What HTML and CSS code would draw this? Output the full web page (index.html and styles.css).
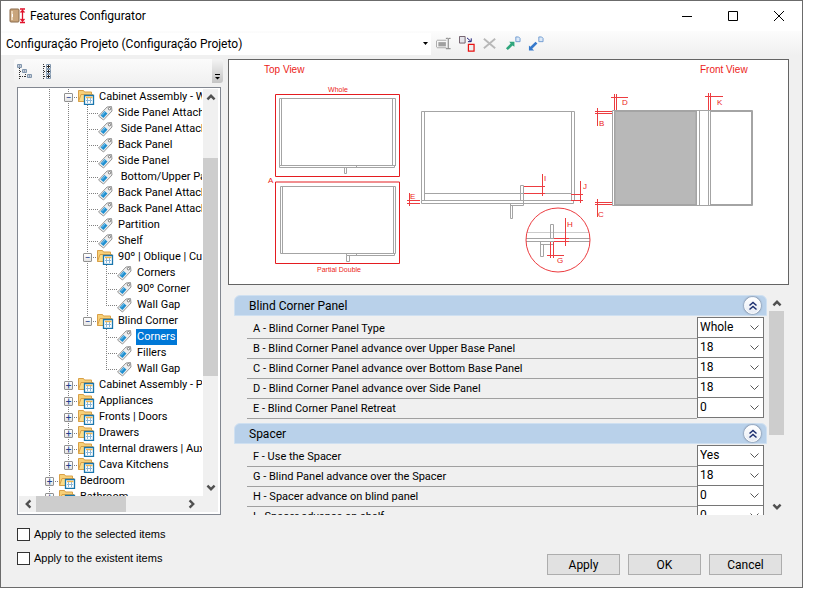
FILE: index.html
```html
<!DOCTYPE html>
<html lang="en">
<head>
    <meta charset="UTF-8">
    <meta name="viewport" content="width=device-width, initial-scale=1.0">
    <title>Features Configurator</title>
    <link rel="stylesheet" href="styles.css">
</head>
<body>
    <!-- Shared icons -->
    <svg class="sprite" aria-hidden="true">
        <symbol id="folder" viewBox="0 0 17 16">
            <path d="M.5 12.500V1.500h5l1 1.500h7v4" fill="#f7d078" stroke="#d9a047"/>
            <path d="M.5 12.500 3 5.500h12v7z" fill="#fbdc8a" stroke="#d9a047"/>
            <path d="M6.500 6.500h9v9h-9z" fill="#fff" stroke="#1976ad" stroke-width="1.300"/>
            <path d="M8 8.500h6.500" stroke="#f0b64c" stroke-width="1.500"/>
            <path d="M8 11.500h6M9.500 9v5M12.500 9v5" stroke="#8db8d8"/>
        </symbol>
        <symbol id="tag" viewBox="0 0 17 16">
            <path d="M1.500 11 10 2l4.500-.5.5 4.500-8.500 9z" fill="#eee" stroke="#969696"/>
            <path d="M3.500 10.500 7.500 6l3 2.500-4 4.500z" fill="#1f8fd0"/>
            <path d="m5 10.500 3-3.500" stroke="#7cc4ec"/>
            <circle cx="12.500" cy="3.700" r="1.200" fill="#fff" stroke="#777"/>
        </symbol>
        <symbol id="chevrons" viewBox="0 0 18 18">
            <path d="m5.500 8.500 3.500-3 3.500 3M5.500 12.500l3.500-3 3.500 3" fill="none" stroke="#1c2f70" stroke-width="1.500"/>
        </symbol>
        <symbol id="up" viewBox="0 0 10 10">
            <path d="m2 7 3-3 3 3" fill="none" stroke="#505050" stroke-width="2"/>
        </symbol>
    </svg>

    <div class="window">
        <header class="titlebar">
            <svg class="app-icon" viewBox="0 0 18 16">
                <rect x="1" y="1" width="9" height="13" rx="1" fill="#c9a57c" stroke="#8a6a4a"/>
                <path d="M3 3v9" stroke="#ead3b5" stroke-width="2"/>
                <path d="M3.500 6v3" stroke="#fff"/>
                <path d="M11 1h5M11 14.500h5M13.500 2v12M11.500 4.500l2-2 2 2M11.500 11l2 2 2-2" fill="none" stroke="#e0102a" stroke-width="1.300"/>
            </svg>
            <h1>Features Configurator</h1>
            <div class="window-buttons">
                <button aria-label="Minimize"><svg viewBox="0 0 10 10"><path d="M0 5.500h10" stroke="#000"/></svg></button>
                <button aria-label="Maximize"><svg viewBox="0 0 10 10"><path d="M.5.5h9v9h-9z" fill="none" stroke="#000"/></svg></button>
                <button aria-label="Close"><svg viewBox="0 0 10 10"><path d="m0 0 10 10M10 0 0 10" stroke="#000"/></svg></button>
            </div>
        </header>

        <div class="toolbar">
            <select class="project" aria-label="Configuration">
                <option>Configuração Projeto (Configuração Projeto)</option>
            </select>
            <button aria-label="Rename"><svg viewBox="0 0 17 17">
                <path d="M1 4.500h10M1 12.500h10M.5 5v7" stroke="#a8a8a8" fill="none"/>
                <path d="M2.500 6.500h8v4.500h-8z" fill="#a0a0a0"/>
                <path d="M10.500 2.500h2l.5.500.5-.5h2M10.500 13.500h5M13 3v10" stroke="#777" fill="none"/>
            </svg></button>
            <button aria-label="Replace"><svg viewBox="0 0 17 17">
                <path d="M.5.500h6v7h-6z" fill="#e4e4ea" stroke="#6c5a66"/>
                <path d="m8.500 2 4 3.500M13 2.500v3.500H9.500" stroke="#101070" fill="none"/>
                <path d="M10 9h6v7h-6z" fill="#eee" stroke="#e81010" stroke-width="1.300"/>
            </svg></button>
            <button aria-label="Delete"><svg viewBox="0 0 17 17">
                <path d="m2 3 12 10M14 3 2 13" stroke="#b8b8b8" stroke-width="2"/>
            </svg></button>
            <button aria-label="Export"><svg viewBox="0 0 17 17">
                <path d="M11.500 1h3l1.500 1.500V6h-4.500z" fill="#dce9f8" stroke="#6f9bd0"/>
                <path d="m1 13 5-5-1.500-2H10v5.500L8 10l-5 5z" fill="#2fa67c"/>
            </svg></button>
            <button aria-label="Import"><svg viewBox="0 0 17 17">
                <path d="M11.500 1h3l1.500 1.500V6h-4.500z" fill="#dce9f8" stroke="#6f9bd0"/>
                <path d="M1 15.500V10l1.500 1.500L8 6l2 2-5.500 5.500 2 2z" fill="#3579cc"/>
            </svg></button>
        </div>

        <main class="content">
            <aside class="sidebar">
                <div class="tree-toolbar">
                    <button aria-label="Collapse all"><svg viewBox="0 0 17 17">
                        <path d="M3.500 5v11M4 8.500h2M9.500 11v4M4 13.500h6" fill="none" stroke="#333" stroke-dasharray="1 1"/>
                        <path d="M1.500 1.500h4v3h-4zM6.500 6.500h4v3h-4zM11.500 11.500h4v3h-4z" fill="#fff" stroke="#8196ad"/>
                        <path d="M2.500 3h2M7.500 8h2M12.500 13h2" stroke="#223c66"/>
                    </svg></button>
                    <button aria-label="Expand all"><svg viewBox="0 0 17 17">
                        <path d="M.5 1v15M1 3.500h3M1 8.500h3M1 13.500h3" fill="none" stroke="#333" stroke-dasharray="1 1"/>
                        <path d="M3.500 1.500h4v4h-4zM3.500 6.500h4v4h-4zM3.500 11.500h4v4h-4z" fill="#fff" stroke="#8196ad"/>
                        <path d="M4 3.500h3M4 8.500h3M4 13.500h3M5.500 2v3M5.500 7v3M5.500 12v3" stroke="#222"/>
                    </svg></button>
                    <button class="overflow" aria-label="Toolbar options"><svg viewBox="0 0 9 12">
                        <path d="M2 3.500h5" stroke="#000"/><path d="M2 6h5L4.500 8.500z"/>
                    </svg></button>
                </div>

                <div class="tree-box">
                    <div class="tree-view">
                        <ul class="tree">
                            <li>
                                <ul>
                                    <li>
                                        <div class="node"><button class="toggle" aria-label="Collapse">−</button><svg><use href="#folder"/></svg><a href="#">Cabinet Assembly - Wall</a></div>
                                        <ul>
                                            <li><div class="node"><i></i><svg><use href="#tag"/></svg><a href="#">Side Panel Attachment</a></div></li>
                                            <li><div class="node"><i></i><svg><use href="#tag"/></svg><a href="#">&nbsp;Side Panel Attachment</a></div></li>
                                            <li><div class="node"><i></i><svg><use href="#tag"/></svg><a href="#">Back Panel</a></div></li>
                                            <li><div class="node"><i></i><svg><use href="#tag"/></svg><a href="#">Side Panel</a></div></li>
                                            <li><div class="node"><i></i><svg><use href="#tag"/></svg><a href="#">&nbsp;Bottom/Upper Panel</a></div></li>
                                            <li><div class="node"><i></i><svg><use href="#tag"/></svg><a href="#">Back Panel Attachment</a></div></li>
                                            <li><div class="node"><i></i><svg><use href="#tag"/></svg><a href="#">Back Panel Attachment</a></div></li>
                                            <li><div class="node"><i></i><svg><use href="#tag"/></svg><a href="#">Partition</a></div></li>
                                            <li><div class="node"><i></i><svg><use href="#tag"/></svg><a href="#">Shelf</a></div></li>
                                            <li>
                                                <div class="node"><button class="toggle" aria-label="Collapse">−</button><svg><use href="#folder"/></svg><a href="#">90º | Oblique | Curved</a></div>
                                                <ul>
                                                    <li><div class="node"><i></i><svg><use href="#tag"/></svg><a href="#">Corners</a></div></li>
                                                    <li><div class="node"><i></i><svg><use href="#tag"/></svg><a href="#">90º Corner</a></div></li>
                                                    <li><div class="node"><i></i><svg><use href="#tag"/></svg><a href="#">Wall Gap</a></div></li>
                                                </ul>
                                            </li>
                                            <li>
                                                <div class="node"><button class="toggle" aria-label="Collapse">−</button><svg><use href="#folder"/></svg><a href="#">Blind Corner</a></div>
                                                <ul>
                                                    <li><div class="node"><i></i><svg><use href="#tag"/></svg><a class="selected" href="#">Corners</a></div></li>
                                                    <li><div class="node"><i></i><svg><use href="#tag"/></svg><a href="#">Fillers</a></div></li>
                                                    <li><div class="node"><i></i><svg><use href="#tag"/></svg><a href="#">Wall Gap</a></div></li>
                                                </ul>
                                            </li>
                                        </ul>
                                    </li>
                                    <li><div class="node"><button class="toggle" aria-label="Expand">+</button><svg><use href="#folder"/></svg><a href="#">Cabinet Assembly - Panels</a></div></li>
                                    <li><div class="node"><button class="toggle" aria-label="Expand">+</button><svg><use href="#folder"/></svg><a href="#">Appliances</a></div></li>
                                    <li><div class="node"><button class="toggle" aria-label="Expand">+</button><svg><use href="#folder"/></svg><a href="#">Fronts | Doors</a></div></li>
                                    <li><div class="node"><button class="toggle" aria-label="Expand">+</button><svg><use href="#folder"/></svg><a href="#">Drawers</a></div></li>
                                    <li><div class="node"><button class="toggle" aria-label="Expand">+</button><svg><use href="#folder"/></svg><a href="#">Internal drawers | Auxiliary</a></div></li>
                                    <li><div class="node"><button class="toggle" aria-label="Expand">+</button><svg><use href="#folder"/></svg><a href="#">Cava Kitchens</a></div></li>
                                </ul>
                            </li>
                            <li><div class="node"><button class="toggle" aria-label="Expand">+</button><svg><use href="#folder"/></svg><a href="#">Bedroom</a></div></li>
                            <li><div class="node"><button class="toggle" aria-label="Expand">+</button><svg><use href="#folder"/></svg><a href="#">Bathroom</a></div></li>
                        </ul>
                    </div>
                    <div class="scroll-v tree-scroll">
                        <button aria-label="Scroll up"><svg><use href="#up"/></svg></button>
                        <div class="track"><div class="thumb"></div></div>
                        <button class="down" aria-label="Scroll down"><svg><use href="#up"/></svg></button>
                    </div>
                    <div class="scroll-h">
                        <button class="left" aria-label="Scroll left"><svg><use href="#up"/></svg></button>
                        <div class="track"><div class="thumb"></div></div>
                        <button class="right" aria-label="Scroll right"><svg><use href="#up"/></svg></button>
                    </div>
                </div>
            </aside>

            <section class="details">
                <div class="preview">
                    <svg viewBox="229 60 559 224" role="img" aria-label="Top and front views">
                        <g class="grey">
                            <path d="M279.500 166V98.500h116V166M281.500 98.500V165M392.500 98.500V165M279.500 165.500h116M279.500 167.500h115v-2M356.500 165v2.500M279.500 165v2.500M344.500 168v5.500h2V168"/>
                            <path d="M280.500 253.500v-67h115v67h-2M282.500 186.500v67M393.500 186.500v67M280.500 253.500h114v2h-48v-2M356.500 253v2.500M346.500 255.500v6h3v-6"/>
                            <path d="M421.500 200.500v-89h153v89M424.500 111.500v89M571.500 111.500v89M424.500 193.500h147M421.500 200.500h153M421.500 200.500v3h152v-3M520.500 200.500v-15h3v15M523.500 200.500v5h-13v-2M510.500 205v13.500h2V205"/>
                            <path class="light" d="M527 232.500h62"/>
                            <path d="M526 238.500h64M526 241.500h64M550.500 238.500v-14h3v14M553.500 241.500v3h-13v-3M540.500 244v12.500h3V244"/>
                        </g>
                        <g class="grey">
                            <path d="M615 111.500h81v93h-81z" fill="#b8b8b8"/>
                            <path d="M612.500 110.500h140v95h-140zM614.500 111v94M696.500 111v94M699.500 111v94M708.500 111v94M710.500 111v94M751.500 111v94M710 111.500h42M710 204.500h42"/>
                        </g>
                        <g class="red">
                            <path class="frame" d="M275.500 94.500h124v82h-124zM275.500 182h124v81.500h-124z"/>
                            <circle cx="558" cy="240" r="32"/>
                            <path d="M542.500 174v22M524 186.500h21M524 193.500h21M580.500 181v22M571 194.500h12M571 200.500h12M409.500 193v13M407 200.500h13M407 203.500h13"/>
                            <path d="M565.500 218v28M554 238.500h15M554 241.500h15M550.500 242v16M553.500 242v16M547 255.500h17"/>
                            <path d="M614.500 94v16M616.500 94v16M611 97.500h17M708.500 93v17M710.500 93v17M705 96.500h18M597.500 108v18M595 111.500h17M595 113.500h17M597.500 199v18M595 202.500h17M595 204.500h17"/>
                        </g>
                        <g class="heading">
                            <text x="264" y="73">Top View</text>
                            <text x="700" y="73">Front View</text>
                        </g>
                        <g class="caption">
                            <text x="338" y="92">Whole</text>
                            <text x="339" y="272">Partial Double</text>
                        </g>
                        <g class="letters">
                            <text x="268" y="183">A</text>
                            <text x="599" y="126">B</text>
                            <text x="598" y="217">C</text>
                            <text x="622" y="105">D</text>
                            <text x="410" y="199">E</text>
                            <text x="557" y="263">G</text>
                            <text x="567" y="227">H</text>
                            <text x="544" y="181">I</text>
                            <text x="583" y="189">J</text>
                            <text x="717" y="105">K</text>
                        </g>
                    </svg>
                </div>

                <div class="features">
                    <div class="feature-list">
                        <section class="group">
                            <header>
                                <h2>Blind Corner Panel</h2>
                                <button class="collapse" aria-label="Collapse"><svg><use href="#chevrons"/></svg></button>
                            </header>
                            <div class="rows">
                                <div class="row"><label for="a">A - Blind Corner Panel Type</label><select id="a"><option>Whole</option><option>Partial Double</option></select></div>
                                <div class="row"><label for="b">B - Blind Corner Panel advance over Upper Base Panel</label><select id="b"><option>18</option></select></div>
                                <div class="row"><label for="c">C - Blind Corner Panel advance over Bottom Base Panel</label><select id="c"><option>18</option></select></div>
                                <div class="row"><label for="d">D - Blind Corner Panel advance over Side Panel</label><select id="d"><option>18</option></select></div>
                                <div class="row"><label for="e">E - Blind Corner Panel Retreat</label><select id="e"><option>0</option></select></div>
                            </div>
                        </section>
                        <section class="group">
                            <header>
                                <h2>Spacer</h2>
                                <button class="collapse" aria-label="Collapse"><svg><use href="#chevrons"/></svg></button>
                            </header>
                            <div class="rows">
                                <div class="row"><label for="f">F - Use the Spacer</label><select id="f"><option>Yes</option><option>No</option></select></div>
                                <div class="row"><label for="g">G - Blind Panel advance over the Spacer</label><select id="g"><option>18</option></select></div>
                                <div class="row"><label for="h">H - Spacer advance on blind panel</label><select id="h"><option>0</option></select></div>
                                <div class="row"><label for="i">I - Spacer advance on shelf</label><select id="i"><option>0</option></select></div>
                            </div>
                        </section>
                    </div>
                    <div class="scroll-v feature-scroll">
                        <button aria-label="Scroll up"><svg><use href="#up"/></svg></button>
                        <div class="track"><div class="thumb"></div></div>
                        <button class="down" aria-label="Scroll down"><svg><use href="#up"/></svg></button>
                    </div>
                </div>
            </section>
        </main>

        <footer class="footer">
            <div class="options">
                <label><input type="checkbox"> Apply to the selected items</label>
                <label><input type="checkbox"> Apply to the existent items</label>
            </div>
            <div class="actions">
                <button>Apply</button>
                <button>OK</button>
                <button>Cancel</button>
            </div>
        </footer>
    </div>
</body>
</html>
```
FILE: styles.css
```css
* {
    margin: 0;
    padding: 0;
    box-sizing: border-box;
}

body {
    height: 100vh;
    padding: 0 10px 10px 0;
    background: #fff;
    color: #000;
    font-family: Roboto, sans-serif;
    font-size: 11px;
    overflow: hidden;
}

button, select, input {
    font: inherit;
    color: inherit;
}

button {
    display: flex;
    align-items: center;
    justify-content: center;
    border: 0;
    background: none;
}

.sprite {
    display: none;
}

.window {
    display: flex;
    flex-direction: column;
    height: 100%;
    border: 1px solid #6b6b6b;
    background: #f0f0f0;
}

/* Title bar */
.titlebar {
    display: flex;
    align-items: center;
    height: 30px;
    padding-left: 8px;
    background: #fff;
}

.app-icon {
    width: 18px;
    height: 16px;
    margin-right: 3px;
}

h1 {
    flex: 1;
    font-size: 12px;
    font-weight: normal;
}

.window-buttons {
    display: flex;
}

.window-buttons button {
    width: 46px;
    height: 29px;
}

.window-buttons svg {
    width: 10px;
    height: 10px;
}

/* Toolbar */
.toolbar {
    display: flex;
    align-items: center;
    gap: 7px;
    height: 25px;
    background: linear-gradient(#fcfcfc, #f0f0f0);
}

.project {
    width: 430px;
    height: 22px;
    margin-right: -2px;
    padding-left: 5px;
    border: 0;
    appearance: none;
    background: #fff url("data:image/svg+xml,%3Csvg xmlns='http://www.w3.org/2000/svg' width='5' height='3'%3E%3Cpath d='M0 0h5L2.500 3z'/%3E%3C/svg%3E") no-repeat right 3px center;
    font-size: 12px;
}

.toolbar button, .toolbar svg {
    width: 16px;
    height: 16px;
}

/* Main area */
.content {
    display: flex;
    flex: 1;
    gap: 5px;
    min-height: 0;
    padding: 3px 13px 0 13px;
}

.sidebar {
    display: flex;
    flex-direction: column;
    gap: 4px;
    width: 209px;
}

.tree-toolbar {
    display: flex;
    gap: 10px;
    height: 24px;
    padding-left: 2px;
    border-radius: 3px;
    background: linear-gradient(#fbfbfb, #f1f1f1);
}

.tree-toolbar svg {
    width: 17px;
    height: 17px;
}

.tree-toolbar .overflow {
    align-items: flex-end;
    width: 11px;
    margin-left: auto;
    border-radius: 0 3px 3px 0;
    background: linear-gradient(#f4f4f4, #c4c4c4);
}

.tree-toolbar .overflow svg {
    width: 9px;
    height: 12px;
}

.tree-box {
    display: grid;
    grid-template-columns: 1fr 15px;
    grid-template-rows: 1fr 16px;
    flex: 1;
    min-height: 0;
    margin: 0 2px 0 3px;
    padding: 1px 2px 2px 1px;
    border: 1px solid #828790;
    background: #fff;
}

.tree-view {
    min-width: 0;
    margin-right: 1px;
    overflow: hidden;
    white-space: nowrap;
}

.tree {
    padding-left: 21px;
}

.tree ul {
    padding-left: 19px;
}

.tree li {
    list-style: none;
    background: repeating-linear-gradient(#808080 0 1px, transparent 1px 2px) 9px 0 / 1px 100% no-repeat;
}

.tree ul li:last-child {
    background-size: 1px 8px;
}

.node {
    display: flex;
    align-items: center;
    height: 16px;
    background: repeating-linear-gradient(90deg, #808080 0 1px, transparent 1px 2px) 9px 8px / 11px 1px no-repeat;
}

.node > * {
    flex: none;
}

.node i {
    width: 19px;
}

.node svg {
    width: 17px;
    height: 16px;
    margin-right: 3px;
}

.node a {
    padding: 0 2px 0 1px;
    color: #000;
    line-height: 16px;
    text-decoration: none;
}

.node a.selected {
    background: #0078d7;
    color: #fff;
}

.toggle {
    width: 9px;
    height: 9px;
    margin: 0 5px;
    border: 1px solid #919191;
    border-radius: 1px;
    background: linear-gradient(#fff, #e4e4e4);
    color: #223f8f;
    font-size: 10px;
    line-height: 7px;
}

/* Scrollbars */
.scroll-v {
    display: flex;
    flex-direction: column;
    width: 15px;
    background: #f0f0f0;
}

.scroll-v button {
    height: 16px;
}

.scroll-v svg, .scroll-h svg {
    width: 12px;
    height: 12px;
}

.track {
    flex: 1;
}

.thumb {
    background: #cdcdcd;
}

.down svg {
    transform: rotate(180deg);
}

.left svg {
    transform: rotate(-90deg);
}

.right svg {
    transform: rotate(90deg);
}

.tree-scroll .thumb {
    height: 58%;
    margin-top: 53px;
}

.scroll-h {
    display: flex;
    grid-column: 1 / 3;
    padding-right: 18px;
    background: #f0f0f0;
}

.scroll-h button {
    width: 17px;
}

.scroll-h .thumb {
    width: 61%;
    height: 16px;
}

.details {
    display: flex;
    flex: 1;
    flex-direction: column;
    gap: 10px;
    min-width: 0;
}

/* Drawing */
.preview {
    border: 1px solid #646464;
    background: #fff;
}

.preview svg {
    display: block;
    width: 100%;
    font-family: "Liberation Sans", Arial, sans-serif;
}

.grey {
    fill: none;
    stroke: #a4a4a4;
    stroke-width: 1;
}

.grey .light {
    stroke: #ccc;
}

.red {
    fill: none;
    stroke: #ec3c40;
    stroke-width: 1;
}

.red .frame {
    stroke: #e41c20;
}

.preview text {
    fill: #ec1c20;
}

.heading {
    font-size: 10px;
}

.caption {
    font-size: 7px;
    text-anchor: middle;
}

.letters {
    font-size: 8px;
}

/* Feature groups */
.features {
    display: flex;
    flex: 1;
    gap: 2px;
    min-height: 0;
    padding: 0 5px 0 6px;
}

.feature-list {
    flex: 1;
    overflow: hidden;
}

.group {
    margin-bottom: 5px;
}

.group header {
    display: flex;
    align-items: center;
    justify-content: space-between;
    height: 21px;
    padding: 0 5px 0 14px;
    border: 1px solid #cfe0f1;
    border-radius: 6px 6px 0 0;
    background: #b9d1ea;
}

h2 {
    font-size: 12px;
    font-weight: normal;
}

.collapse {
    width: 17px;
    height: 17px;
    border: 1px solid #fff;
    border-radius: 50%;
    background: linear-gradient(#fff, #e6ebf4);
    box-shadow: 0 0 2px #445;
}

.collapse svg {
    flex: none;
    width: 18px;
    height: 18px;
}

.rows {
    padding: 2px 3px 0 13px;
}

.row {
    display: grid;
    grid-template-columns: 1fr 67px;
    height: 20px;
}

.row label {
    padding: 2px 0 0 6px;
    border-bottom: 1px solid #a0a0a0;
    line-height: 18px;
}

.row select {
    height: 21px;
    margin-top: -1px;
    padding: 0 0 2px 2px;
    border: 1px solid #767676;
    appearance: none;
    background: #fff url("data:image/svg+xml,%3Csvg xmlns='http://www.w3.org/2000/svg' width='9' height='6'%3E%3Cpath d='m.5.5 4 4 4-4' fill='none' stroke='%23555'/%3E%3C/svg%3E") no-repeat right 4px center;
    font-size: 12px;
}

.feature-scroll .thumb {
    height: 66%;
}

/* Footer */
.footer {
    display: flex;
    justify-content: space-between;
    align-items: flex-end;
    padding: 11px 20px 12px 16px;
}

.options {
    display: flex;
    flex-direction: column;
    gap: 8px;
    padding-bottom: 9px;
    font-family: "Liberation Sans", Arial, sans-serif;
}

.options label {
    display: flex;
    align-items: center;
    gap: 4px;
    height: 16px;
}

.options input {
    width: 13px;
    height: 13px;
    border: 1px solid #333;
    appearance: none;
    background: #fff;
}

.options input:checked {
    background: #0078d7;
}

.actions {
    display: flex;
    gap: 8px;
}

.actions button {
    width: 73px;
    height: 21px;
    border: 1px solid #adadad;
    background: #e1e1e1;
    font-size: 12px;
}
```
